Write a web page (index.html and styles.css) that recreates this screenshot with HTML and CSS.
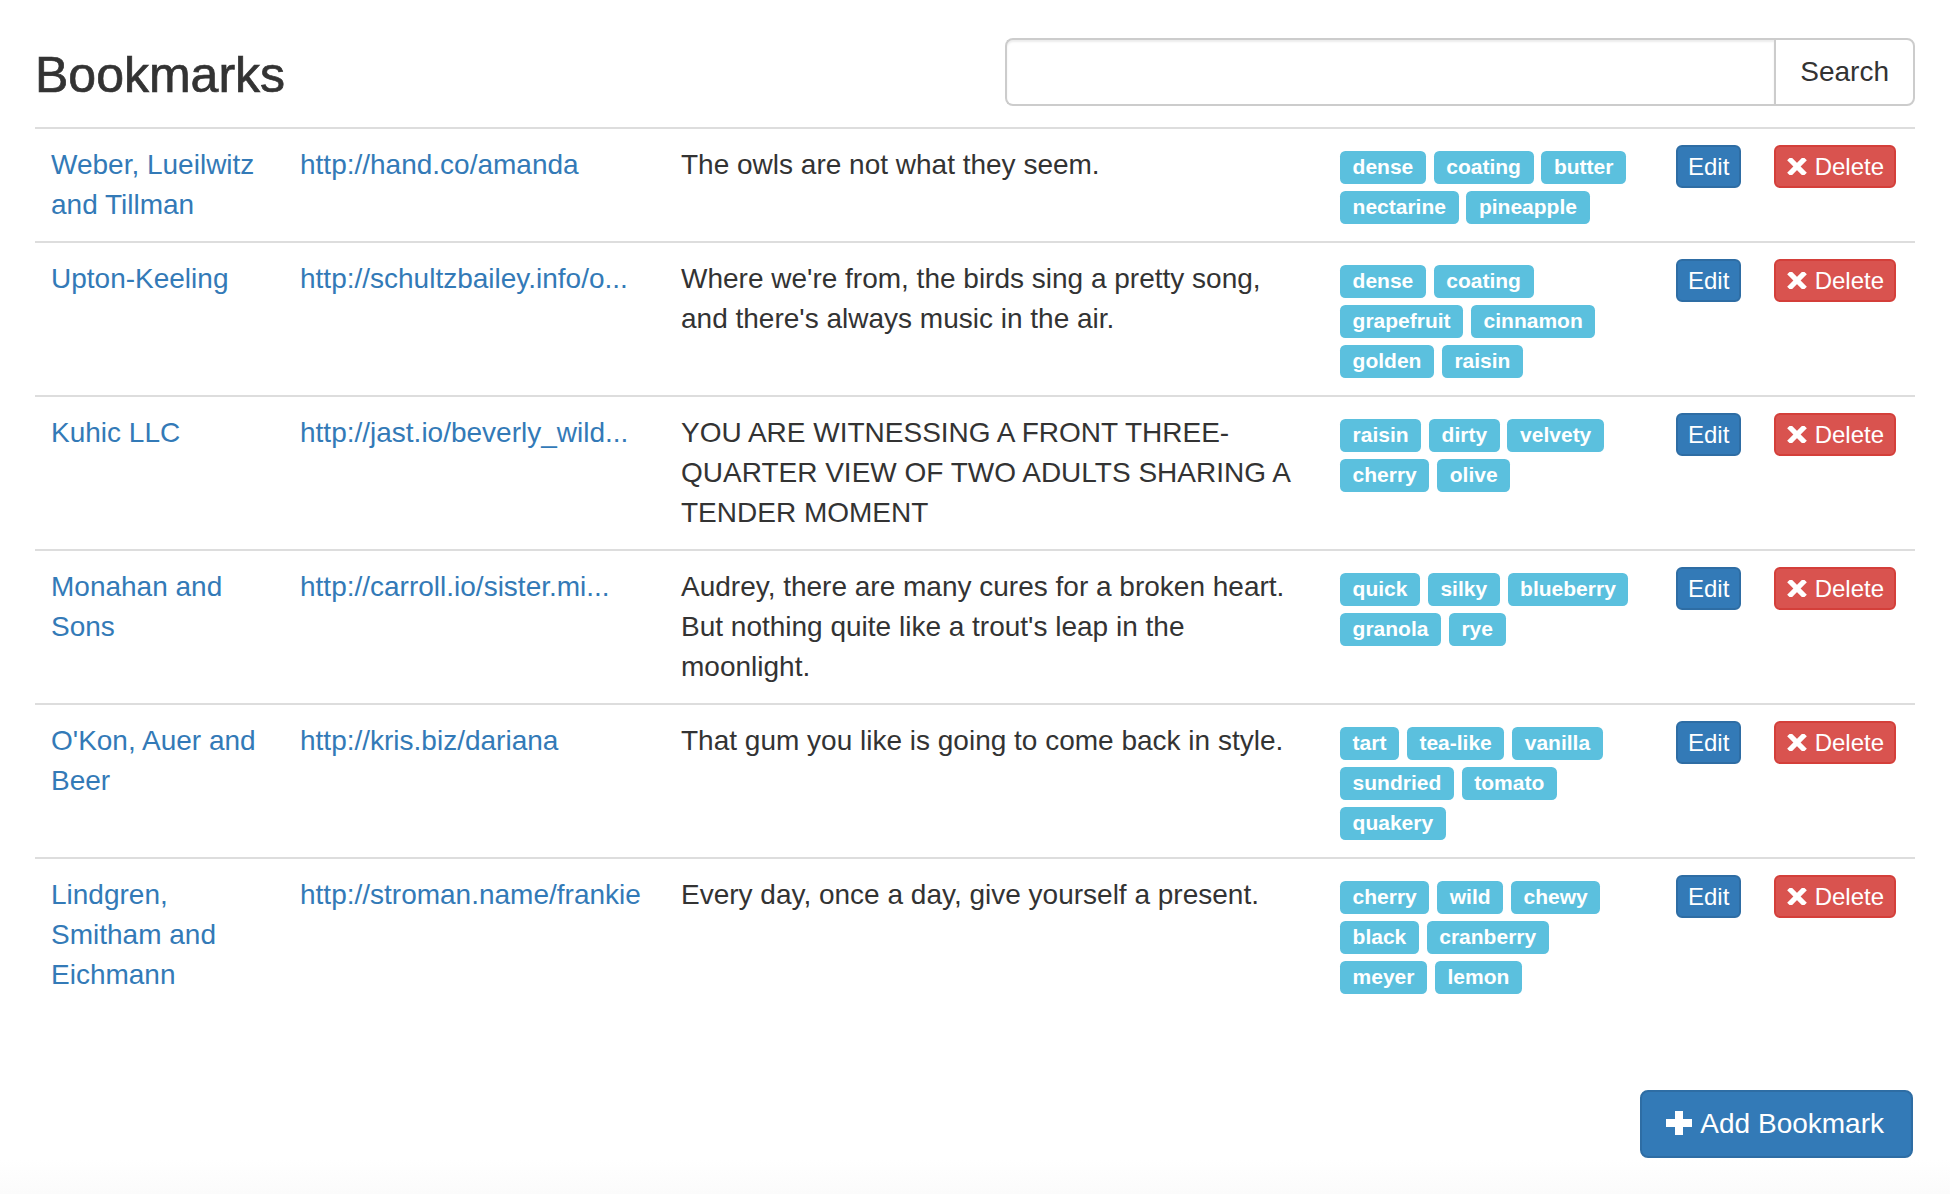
FILE: index.html
```html
<!DOCTYPE html>
<html lang="en">
<head>
<meta charset="utf-8">
<title>Bookmarks</title>
<link rel="stylesheet" href="styles.css">
</head>
<body>
<div class="container">
  <header class="page-header">
    <h1 class="title">Bookmarks</h1>
    <form class="search">
      <input class="search-input" type="text" aria-label="Search bookmarks">
      <button class="search-btn" type="button">Search</button>
    </form>
  </header>

  <table class="bookmarks">
    <colgroup>
      <col class="c-name"><col class="c-url"><col class="c-desc"><col class="c-tags"><col class="c-edit"><col class="c-del">
    </colgroup>
    <tbody>
      <tr>
        <td><a class="link" href="#">Weber, Lueilwitz and Tillman</a></td>
        <td class="url"><a class="link" href="#">http://hand.co/amanda</a></td>
        <td>The owls are not what they seem.</td>
        <td><div class="tags"><span class="tag">dense</span> <span class="tag">coating</span> <span class="tag">butter</span> <span class="tag">nectarine</span> <span class="tag">pineapple</span></div></td>
        <td><button class="btn btn-edit" type="button">Edit</button></td>
        <td><button class="btn btn-delete" type="button"><svg class="ico-x" viewBox="0 0 22 17" width="22" height="17"><path d="M3 0.5 L19 16.5 M19 0.5 L3 16.5" stroke="#fff" stroke-width="5.2" fill="none"/></svg> Delete</button></td>
      </tr>
      <tr>
        <td><a class="link" href="#">Upton-Keeling</a></td>
        <td class="url"><a class="link" href="#">http://schultzbailey.info/o...</a></td>
        <td>Where we're from, the birds sing a pretty song, and there's always music in the air.</td>
        <td><div class="tags"><span class="tag">dense</span> <span class="tag">coating</span> <span class="tag">grapefruit</span> <span class="tag">cinnamon</span> <span class="tag">golden</span> <span class="tag">raisin</span></div></td>
        <td><button class="btn btn-edit" type="button">Edit</button></td>
        <td><button class="btn btn-delete" type="button"><svg class="ico-x" viewBox="0 0 22 17" width="22" height="17"><path d="M3 0.5 L19 16.5 M19 0.5 L3 16.5" stroke="#fff" stroke-width="5.2" fill="none"/></svg> Delete</button></td>
      </tr>
      <tr>
        <td><a class="link" href="#">Kuhic LLC</a></td>
        <td class="url"><a class="link" href="#">http://jast.io/beverly_wild...</a></td>
        <td>YOU ARE WITNESSING A FRONT THREE-QUARTER VIEW OF TWO ADULTS SHARING A TENDER MOMENT</td>
        <td><div class="tags"><span class="tag">raisin</span> <span class="tag">dirty</span> <span class="tag">velvety</span> <span class="tag">cherry</span> <span class="tag">olive</span></div></td>
        <td><button class="btn btn-edit" type="button">Edit</button></td>
        <td><button class="btn btn-delete" type="button"><svg class="ico-x" viewBox="0 0 22 17" width="22" height="17"><path d="M3 0.5 L19 16.5 M19 0.5 L3 16.5" stroke="#fff" stroke-width="5.2" fill="none"/></svg> Delete</button></td>
      </tr>
      <tr>
        <td><a class="link" href="#">Monahan and Sons</a></td>
        <td class="url"><a class="link" href="#">http://carroll.io/sister.mi...</a></td>
        <td>Audrey, there are many cures for a broken heart. But nothing quite like a trout's leap in the moonlight.</td>
        <td><div class="tags"><span class="tag">quick</span> <span class="tag">silky</span> <span class="tag">blueberry</span> <span class="tag">granola</span> <span class="tag">rye</span></div></td>
        <td><button class="btn btn-edit" type="button">Edit</button></td>
        <td><button class="btn btn-delete" type="button"><svg class="ico-x" viewBox="0 0 22 17" width="22" height="17"><path d="M3 0.5 L19 16.5 M19 0.5 L3 16.5" stroke="#fff" stroke-width="5.2" fill="none"/></svg> Delete</button></td>
      </tr>
      <tr>
        <td><a class="link" href="#">O'Kon, Auer and Beer</a></td>
        <td class="url"><a class="link" href="#">http://kris.biz/dariana</a></td>
        <td>That gum you like is going to come back in style.</td>
        <td><div class="tags"><span class="tag">tart</span> <span class="tag">tea-like</span> <span class="tag">vanilla</span> <span class="tag">sundried</span> <span class="tag">tomato</span> <span class="tag">quakery</span></div></td>
        <td><button class="btn btn-edit" type="button">Edit</button></td>
        <td><button class="btn btn-delete" type="button"><svg class="ico-x" viewBox="0 0 22 17" width="22" height="17"><path d="M3 0.5 L19 16.5 M19 0.5 L3 16.5" stroke="#fff" stroke-width="5.2" fill="none"/></svg> Delete</button></td>
      </tr>
      <tr>
        <td><a class="link" href="#">Lindgren, Smitham and Eichmann</a></td>
        <td class="url"><a class="link" href="#">http://stroman.name/frankie</a></td>
        <td>Every day, once a day, give yourself a present.</td>
        <td><div class="tags"><span class="tag">cherry</span> <span class="tag">wild</span> <span class="tag">chewy</span> <span class="tag">black</span> <span class="tag">cranberry</span> <span class="tag">meyer</span> <span class="tag">lemon</span></div></td>
        <td><button class="btn btn-edit" type="button">Edit</button></td>
        <td><button class="btn btn-delete" type="button"><svg class="ico-x" viewBox="0 0 22 17" width="22" height="17"><path d="M3 0.5 L19 16.5 M19 0.5 L3 16.5" stroke="#fff" stroke-width="5.2" fill="none"/></svg> Delete</button></td>
      </tr>
    </tbody>
  </table>

  <div class="actions">
    <button class="btn-add" type="button"><svg class="ico-plus" viewBox="0 0 26 24" width="26" height="24"><path d="M9 0 H17 V8 H26 V16 H17 V24 H9 V16 H0 V8 H9 Z" fill="#fff"/></svg> Add Bookmark</button>
  </div>
</div>
</body>
</html>
```

FILE: styles.css
```css
html {
  min-height: 100%;
  background: linear-gradient(to bottom, #ffffff 0, #ffffff 1160px, #fbfbfb 1194px);
}

body {
  margin: 0;
  font-family: "Liberation Sans", Arial, Helvetica, sans-serif;
  font-size: 28px;
  line-height: 40px;
  color: #333333;
}

.container {
  width: 1880px;
  margin: 0 auto;
}

/* ---------- header ---------- */
.page-header {
  display: flex;
  align-items: flex-start;
  padding-top: 38px;
  margin-bottom: 21px;
}

.title {
  flex: 1;
  margin: 10px 0 0;
  font-size: 50px;
  line-height: 55px;
  font-weight: 400;
  color: #333333;
  -webkit-text-stroke: 0.7px #333333;
}

.search {
  display: flex;
  width: 910px;
  margin: 0;
}

.search-input {
  flex: 1;
  box-sizing: border-box;
  height: 68px;
  margin: 0;
  padding: 12px 24px;
  border: 2px solid #cccccc;
  border-right: 0;
  border-radius: 8px 0 0 8px;
  box-shadow: inset 0 2px 2px rgba(0, 0, 0, 0.075);
  font: inherit;
  color: #555555;
  background: #ffffff;
  outline: none;
}

.search-btn {
  box-sizing: border-box;
  height: 68px;
  margin: 0;
  padding: 12px 24px;
  border: 2px solid #cccccc;
  border-radius: 0 8px 8px 0;
  background: #ffffff;
  font: inherit;
  color: #333333;
  cursor: pointer;
}

/* ---------- table ---------- */
.bookmarks {
  width: 100%;
  border-collapse: collapse;
  table-layout: fixed;
}

.c-name { width: 249px; }
.c-url  { width: 381px; }
.c-desc { width: 659px; }
.c-tags { width: 336px; }
.c-edit { width: 98px; }
.c-del  { width: 157px; }

.bookmarks td {
  padding: 16px;
  border-top: 2px solid #dddddd;
  vertical-align: top;
}

.url {
  white-space: nowrap;
  overflow: hidden;
}

.link {
  color: #337ab7;
  text-decoration: none;
}

.tags {
  max-width: 295px;
}

.tag {
  display: inline;
  padding: 0.2em 0.6em 0.3em;
  font-size: 21px;
  font-weight: 700;
  line-height: 1;
  color: #ffffff;
  background-color: #5bc0de;
  border-radius: 0.25em;
  white-space: nowrap;
  vertical-align: baseline;
}

/* ---------- buttons ---------- */
.btn {
  display: inline-block;
  box-sizing: border-box;
  margin: 0;
  padding: 2px 10px;
  font-family: inherit;
  font-size: 24px;
  line-height: 35px;
  color: #ffffff;
  border: 2px solid transparent;
  border-radius: 6px;
  white-space: nowrap;
  vertical-align: baseline;
  cursor: pointer;
}

.btn-edit {
  background-color: #337ab7;
  border-color: #2e6da4;
}

.btn-delete {
  background-color: #d9534f;
  border-color: #d43f3a;
}

.ico-x {
  display: inline-block;
  vertical-align: baseline;
}

.actions {
  display: flex;
  justify-content: flex-end;
  margin-top: 79px;
}

.btn-add {
  box-sizing: border-box;
  margin: 0 2px 0 0;
  padding: 12px 27px 12px 24px;
  font-family: inherit;
  font-size: 28px;
  line-height: 40px;
  color: #ffffff;
  background-color: #337ab7;
  border: 2px solid #2e6da4;
  border-radius: 8px;
  white-space: nowrap;
  cursor: pointer;
}

.ico-plus {
  display: inline-block;
  vertical-align: -2px;
  margin-right: 2px;
}
```
